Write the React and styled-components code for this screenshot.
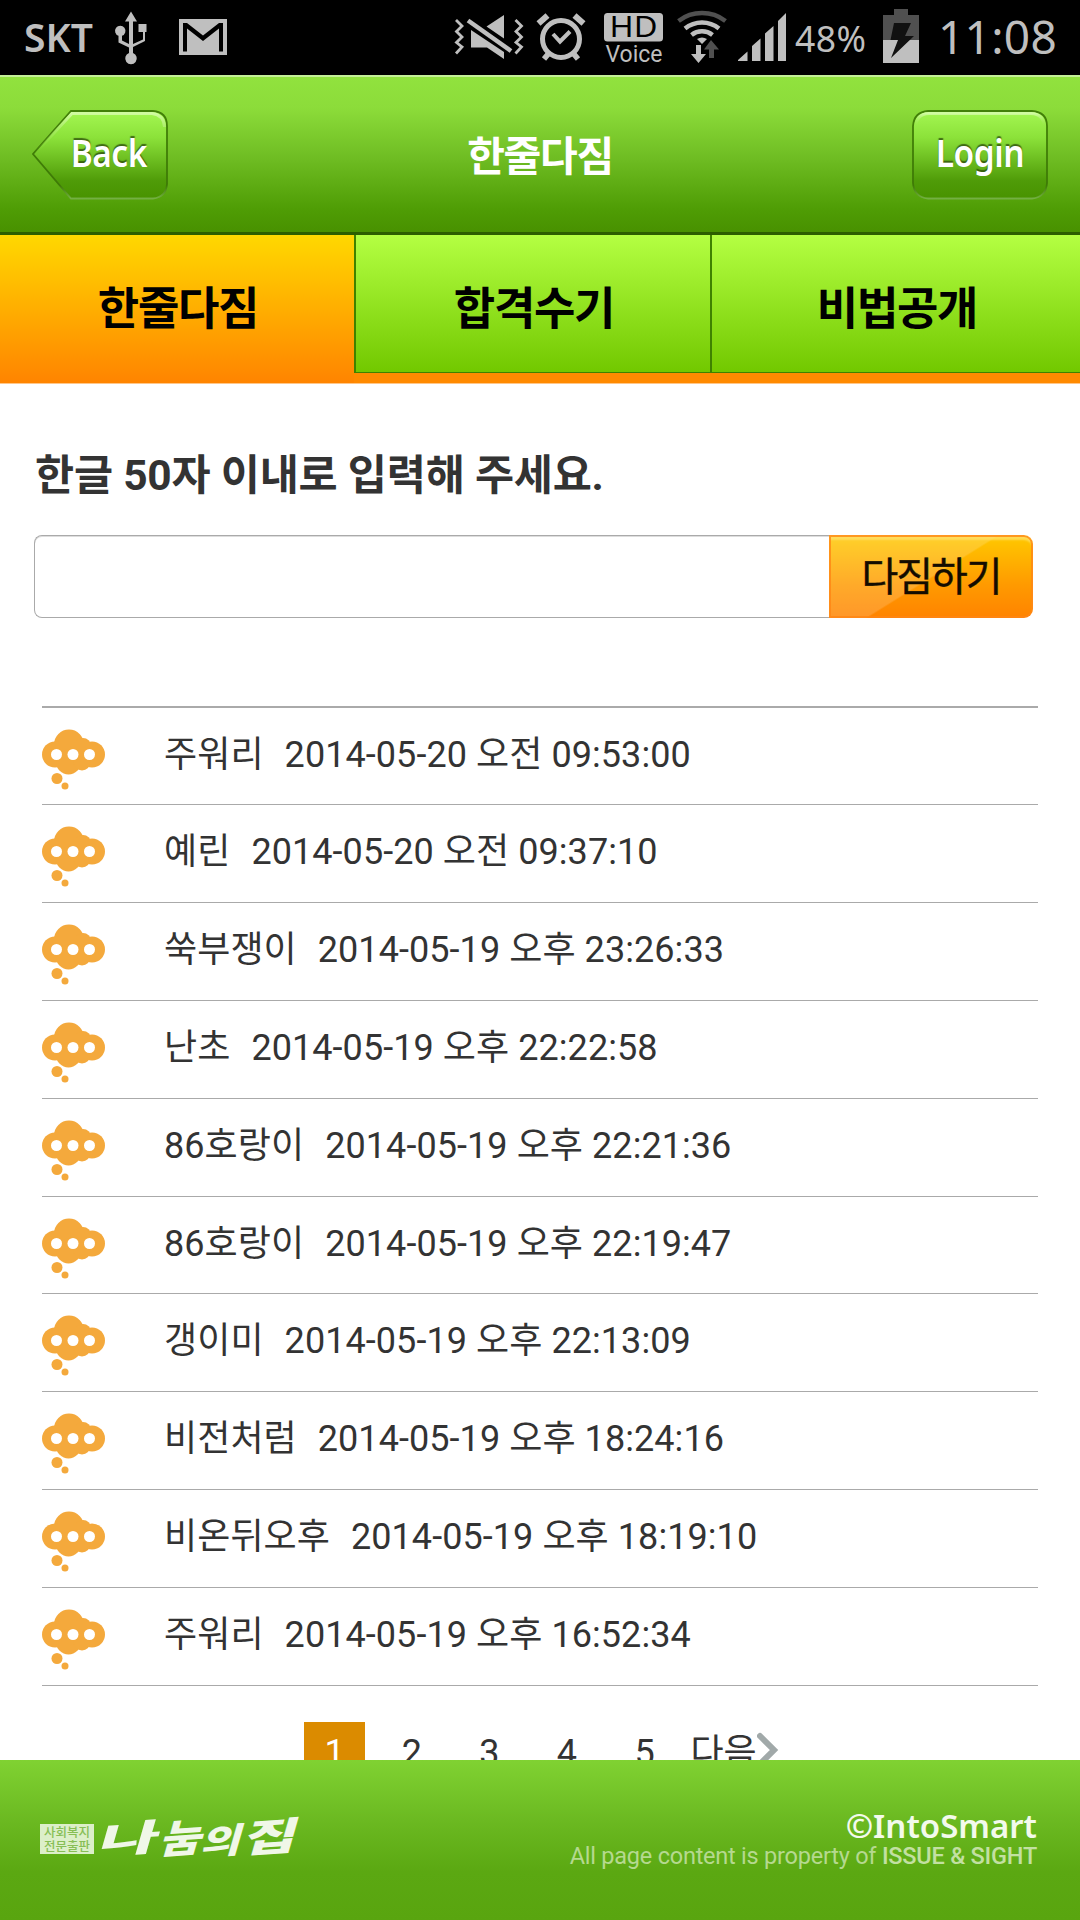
import React from "react";
import styled, { createGlobalStyle } from "styled-components";

const Global = createGlobalStyle`
  * { box-sizing: border-box; }
  html, body { margin: 0; padding: 0; background: #fff; }
  body {
    width: 1080px; height: 1920px; overflow: hidden;
    font-family: Roboto, "Noto Sans CJK KR", sans-serif; color: #333;
  }
`;

const Screen = styled.div`
  width: 1080px; height: 1920px; display: flex; flex-direction: column; overflow: hidden;
`;

const StatusBar = styled.div`
  flex: none; height: 75px; background: #000; color: #bfbfbf;
  display: flex; align-items: flex-start; justify-content: space-between;
  font-family: "Noto Sans", sans-serif; line-height: 1;
`;
const StatusGroup = styled.div`
  display: flex; align-items: flex-start;
`;
const StatusText = styled.span`
  font-size: ${(p) => p.$size}px; font-weight: ${(p) => p.$weight || 400};
  line-height: ${(p) => p.$line}px; width: ${(p) => p.$width}px;
  margin-left: ${(p) => p.$gap || 0}px; white-space: nowrap;
  letter-spacing: ${(p) => p.$track || 0}px;
`;
const StatusSvg = styled.svg`
  display: block; flex: none;
`;

const Header = styled.header`
  flex: none; height: 160px; padding: 0 32px;
  display: flex; align-items: flex-start; justify-content: space-between;
  background: linear-gradient(#91e23e 0, #8cdc3a 20%, #6fbd23 52%, #4f9d05 85%, #489100 100%);
  border-top: 2px solid #c4ef98; border-bottom: 3px solid #2c5e00;
`;
const HeaderTitle = styled.h1`
  margin: 0; color: #fff; font-size: 41px; font-weight: 700; line-height: 160px; height: 155px;
  letter-spacing: -1.3px;
`;
const HeaderButton = styled.button`
  width: 136px; height: 90px; margin: 33px 0 0; padding: 0; border: 0; background: none;
  display: grid; place-items: stretch; color: #fff; font-family: "Noto Sans", sans-serif;
  > * { grid-area: 1 / 1; }
`;
const ButtonCaption = styled.span`
  padding-left: ${(p) => p.$inset || 0}px; font-size: 38px; font-weight: 600; line-height: 84px;
  text-shadow: 0 -2px 1px rgba(40, 70, 10, 0.75); transform: scaleX(0.88);
  text-align: center; z-index: 1; letter-spacing: -0.5px;
`;

const Tabs = styled.nav`
  flex: none; height: 149px; display: grid; grid-template-columns: 354px 356px 370px;
  background: #ff8a00; border-bottom: 1px solid #ffc78a;
`;
const Tab = styled.a`
  height: ${(p) => (p.$active ? 148 : 138)}px; line-height: 149px; text-align: center;
  padding-left: 2px;
  color: #000; font-size: 45px; font-weight: 700; letter-spacing: -1.3px;
  border-left: ${(p) => (p.$active ? "0" : "2px solid #3f8200")};
  border-bottom: ${(p) => (p.$active ? "0" : "1px solid #3f8200")};
  background: ${(p) =>
    p.$active ? "linear-gradient(#ffd800, #ffae00 50%, #ff8400)" : "linear-gradient(#b4ff42, #72c800)"};
`;

const Content = styled.main`
  flex: 1; min-height: 0; overflow: hidden; display: flex; flex-direction: column;
`;
const Prompt = styled.label`
  display: block; margin: 60px 0 0 35px; height: 64px; line-height: 64px;
  font-size: 42.5px; font-weight: 700; color: #333; letter-spacing: -0.2px; white-space: nowrap;
`;
const EntryForm = styled.form`
  margin: 27px 0 0 34px; display: flex; height: 83px;
`;
const EntryInput = styled.input`
  width: 795px; height: 83px; border: 1px solid #aaa; border-right: 0; border-radius: 8px 0 0 8px;
  background: #fff; outline: 0; box-shadow: inset 0 1px 0 #ddd;
`;
const SubmitButton = styled.button`
  width: 204px; height: 83px; padding: 0; border: 0; border-radius: 0 9px 9px 0;
  background:
    linear-gradient(148deg, rgba(255, 255, 255, 0.16) 50%, rgba(255, 255, 255, 0) 51%),
    linear-gradient(#ffc900, #ff9a00 60%, #ff8300);
  box-shadow: inset 0 0 0 2px rgba(255, 134, 20, 0.8), inset 0 5px 2px rgba(255, 225, 110, 0.75);
  color: #140c00; font-family: "Noto Sans CJK KR", sans-serif; font-size: 40px; font-weight: 400;
  line-height: 78px; letter-spacing: -2px; -webkit-text-stroke: 0.4px #140c00;
  display: flex; justify-content: center; align-items: flex-start;
`;

const List = styled.ul`
  list-style: none; margin: 88px 42px 0; padding: 0; border-top: 2px solid #aaa;
`;
const Row = styled.li`
  height: 97.9px; border-bottom: 1.5px solid #aaa; display: flex; align-items: flex-start;
  font-size: 36px; line-height: 95px; white-space: pre; letter-spacing: 0.07px;
  &:first-child { height: 97px; line-height: 94px; }
`;
const CloudBox = styled.span`
  width: 63px; margin: 21px 59px 0 0; line-height: 0;
`;
const Author = styled.span`
  margin-right: 21px;
`;

const Pager = styled.div`
  margin: 36px 0 0 304px; display: flex; font-size: 36px; line-height: 62px;
`;
const Page = styled.a`
  width: ${(p) => (p.$active ? 61 : 77.6)}px; height: 62px; text-align: center;
  background: ${(p) => (p.$active ? "#db8b00" : "none")}; color: ${(p) => (p.$active ? "#fff" : "#333")};
  margin-right: ${(p) => (p.$active ? 8 : 0)}px;
`;
const NextPage = styled.a`
  margin-left: 7px; display: flex;
`;

const Footer = styled.footer`
  flex: none; height: 160px; padding: 0 43px 0 40px; display: flex; justify-content: space-between;
  align-items: flex-start; background: linear-gradient(#80d232, #6bb921 38%, #5ba812 70%, #59a50f);
`;
const Brand = styled.div`
  display: flex; align-items: flex-start; padding-top: 64px;
`;
const Seal = styled.div`
  width: 54px; height: 30px; background: #dcefc9; color: #87be55; padding-top: 1px;
  font: 500 12.5px/14px "Noto Sans CJK KR", sans-serif; text-align: center;
  display: flex; flex-direction: column;
`;
const BrandName = styled.div`
  display: flex; margin-left: 7px; color: #f0f7e8; height: 36px; align-items: flex-start;
  font-family: "Noto Sans CJK KR", sans-serif; font-weight: 900;
`;
const Stroke = styled.span`
  font-size: ${(p) => p.$size}px; line-height: 36px; width: ${(p) => p.$width}px;
  transform-origin: 0 50%; transform: translateY(${(p) => p.$drop || 0}px) skew(-16deg, -4deg) scaleX(${(p) => p.$stretch});
  white-space: nowrap;
`;
const Legal = styled.div`
  display: flex; flex-direction: column; align-items: flex-end; white-space: nowrap; padding-top: 46px;
`;
const Copyright = styled.div`
  font: 600 33px/40px "Noto Sans", sans-serif; color: #f3faec;
`;
const Property = styled.div`
  font: 400 23.500px/28px Roboto, sans-serif; color: #b5d98f; margin-top: -4px; letter-spacing: -0.23px;
  b { font-weight: 500; color: #c2e0a2; }
`;

const StatusLeftIcons = () => (
  <StatusSvg width="150" height="75" viewBox="100 0 150 75" fill="#bfbfbf">
    <path d="M131 11.500L137 21.500H133V44L143 39.500V32H138.500V24H146.500V32H145V41L133 47V53A5.800 5.800 0 1 1 129 53V47.500L118.500 42.500V35.800A5.200 5.200 0 1 1 122 35.800V40.500L129 44V21.500H125Z" />
    <path d="M179 19H227V55H179Z" />
    <path d="M183 51.500V23H187L203 35.500L219 23H223V51.500H219V28.500L203 41L187 28.500V51.500Z" fill="#000" />
  </StatusSvg>
);

const StatusRightIcons = () => (
  <StatusSvg width="346" height="75" viewBox="448 0 346 75" fill="#bfbfbf">
    <g fill="none" stroke="#bfbfbf" strokeWidth="2.800">
      <path d="M456 20L462 26L456.500 31.500L462 37L456.500 42.500L462 47L456 53.500" />
      <path d="M515.500 20L521.500 26L516 31.500L521.500 37L516 42.500L521.500 47L515.500 53.500" />
    </g>
    <path d="M504 15V38.500L486.500 26.500ZM471 30L504 52V59L487 47.500H471Z" />
    <path d="M468 20.500L511 51" stroke="#bfbfbf" strokeWidth="4.500" />
    <g fill="none" stroke="#bfbfbf">
      <circle cx="561" cy="39" r="18.500" strokeWidth="5" />
      <path d="M553 34L560 41.500L570 31.500" strokeWidth="4" />
      <path d="M538.500 23.500L547.500 15.500M583.500 23.500L574.500 15.500" strokeWidth="6" />
      <path d="M549 53L544 59M573 53L578 59" strokeWidth="5.500" />
    </g>
    <rect x="604" y="13" width="59" height="28.500" rx="3.500" />
    <text x="633.500" y="36.500" fill="#000" textAnchor="middle" fontFamily="Noto Sans" fontSize="28.500" textLength="48" lengthAdjust="spacingAndGlyphs">HD</text>
    <text x="634" y="61.500" textAnchor="middle" fontFamily="Roboto" fontSize="23" textLength="57" lengthAdjust="spacingAndGlyphs">Voice</text>
    <g fill="none" stroke="#bfbfbf" strokeWidth="4.500">
      <path d="M678.500 21A39 39 0 0 1 725.500 21" stroke="#505050" />
      <path d="M685 28.500A27 27 0 0 1 719 28.500" />
      <path d="M691.500 35A17 17 0 0 1 712.500 35" />
    </g>
    <path d="M697 39Q702 36 707 39L702 44Z" />
    <path d="M711 40L719 49.500H714V58H709V49.500H704Z" fill="#505050" />
    <path d="M696 45H701V54H706L698.500 63L691 54H696Z" />
    <path d="M738 61V60L747.500 51.500V61ZM752 61V46L760.500 38.500V61ZM765 61V33.500L773.500 26V61ZM778 61V21L786 13V61Z" />
  </StatusSvg>
);

const BatteryIcon = () => (
  <StatusSvg width="36" height="75" viewBox="883 0 36 75">
    <path d="M894 9H908V15H919V40H883V15H894Z" fill="#505050" />
    <path d="M883 40H919V63H883Z" fill="#bfbfbf" />
    <path d="M894 23H911L905 36H914L891 58L898 40H890.500Z" fill="#111" />
  </StatusSvg>
);

const ButtonShape = ({ back }) => {
  const id = back ? "backFill" : "loginFill";
  const outer = back
    ? "M39 1H121Q135 2 135 16V74Q134 87 121 88.500H39L1 44Z"
    : "M16 1H120Q135 2 135 16V73Q134 87 120 88.500H16Q2 87 1 73V16Q2 2 16 1Z";
  const shine = back ? "M3.500 43L40 3.500H120Q132 5 132.500 17" : "M3.500 18Q4 4 17 3.500H119Q132 4 132.500 18";
  return (
    <svg width="136" height="90" viewBox="0 0 136 90">
      <defs>
        <linearGradient id={id} x1="0" y1="0" x2="0" y2="1">
          <stop offset="0.050" stopColor="#a0f34e" />
          <stop offset="0.300" stopColor="#8ce23a" />
          <stop offset="0.800" stopColor="#4f9b08" />
          <stop offset="1" stopColor="#489300" />
        </linearGradient>
        <linearGradient id={id + "Edge"} x1="0" y1="0" x2="0" y2="1">
          <stop offset="0" stopColor="#428008" />
          <stop offset="0.850" stopColor="#3e7a06" />
          <stop offset="1" stopColor="#73b042" />
        </linearGradient>
        <linearGradient id={id + "Shine"} x1="0" y1="0" x2="0" y2="1">
          <stop offset="0" stopColor="#d0fba0" />
          <stop offset="1" stopColor="#8de03c" stopOpacity="0" />
        </linearGradient>
      </defs>
      <path d={outer} fill={`url(#${id})`} stroke={`url(#${id}Edge)`} strokeWidth="1.800" />
      <path d={shine} fill="none" stroke={`url(#${id}Shine)`} strokeWidth="3" />
    </svg>
  );
};

const CloudIcon = () => (
  <svg width="63" height="61" viewBox="0 0 63 61">
    <g fill="#f4a93c">
      <circle cx="27" cy="15.500" r="15" />
      <circle cx="41" cy="17" r="8" />
      <circle cx="13" cy="25.500" r="13" />
      <circle cx="50" cy="25.500" r="13" />
      <rect x="12" y="13" width="38" height="25" />
      <circle cx="26.500" cy="33" r="12.500" />
      <circle cx="40" cy="33" r="8.500" />
      <circle cx="15" cy="49.500" r="5.500" />
      <circle cx="23" cy="57" r="3.500" />
    </g>
    <g fill="#fff">
      <circle cx="14.500" cy="25.500" r="5.500" />
      <circle cx="31" cy="25.500" r="5.500" />
      <circle cx="47.500" cy="25.500" r="5.500" />
    </g>
  </svg>
);

const tabs = ["한줄다짐", "합격수기", "비법공개"];
const entries = [
  ["주워리", "2014-05-20 오전 09:53:00"],
  ["예린", "2014-05-20 오전 09:37:10"],
  ["쑥부쟁이", "2014-05-19 오후 23:26:33"],
  ["난초", "2014-05-19 오후 22:22:58"],
  ["86호랑이", "2014-05-19 오후 22:21:36"],
  ["86호랑이", "2014-05-19 오후 22:19:47"],
  ["갱이미", "2014-05-19 오후 22:13:09"],
  ["비전처럼", "2014-05-19 오후 18:24:16"],
  ["비온뒤오후", "2014-05-19 오후 18:19:10"],
  ["주워리", "2014-05-19 오후 16:52:34"],
];

export default function App() {
  return (
    <Screen>
      <Global />
      <StatusBar>
        <StatusGroup>
          <StatusText $size={39} $weight={600} $line={74} $width={76} $gap={24}>SKT</StatusText>
          <StatusLeftIcons />
        </StatusGroup>
        <StatusGroup>
          <StatusRightIcons />
          <StatusText $size={35.5} $line={77} $width={88} $gap={1} $track={0.4}>48%</StatusText>
          <BatteryIcon />
          <StatusText $size={46} $line={72} $width={142} $gap={19} $track={0.3}>11:08</StatusText>
        </StatusGroup>
      </StatusBar>
      <Header>
        <HeaderButton>
          <ButtonShape back />
          <ButtonCaption $inset={20}>Back</ButtonCaption>
        </HeaderButton>
        <HeaderTitle>한줄다짐</HeaderTitle>
        <HeaderButton>
          <ButtonShape />
          <ButtonCaption>Login</ButtonCaption>
        </HeaderButton>
      </Header>
      <Tabs>
        {tabs.map((t, i) => (
          <Tab key={t} $active={i === 0}>{t}</Tab>
        ))}
      </Tabs>
      <Content>
        <Prompt htmlFor="pledge">한글 50자 이내로 입력해 주세요.</Prompt>
        <EntryForm>
          <EntryInput id="pledge" />
          <SubmitButton type="button">다짐하기</SubmitButton>
        </EntryForm>
        <List>
          {entries.map(([name, date], i) => (
            <Row key={i}>
              <CloudBox><CloudIcon /></CloudBox>
              <Author>{name}</Author>
              <span>{date}</span>
            </Row>
          ))}
        </List>
        <Pager>
          {[1, 2, 3, 4, 5].map((n) => (
            <Page key={n} $active={n === 1}>{n}</Page>
          ))}
          <NextPage>
            다음
            <svg width="24" height="44" viewBox="0 0 24 44">
              <path d="M3 14L17 28L3 42" fill="none" stroke="#a1a9a9" strokeWidth="6" strokeLinecap="round" />
            </svg>
          </NextPage>
        </Pager>
      </Content>
      <Footer>
        <Brand>
          <Seal><span>사회복지</span><span>전문출판</span></Seal>
          <BrandName>
            <Stroke $size={37} $width={62} $stretch={1.75} $drop={-4}>나</Stroke>
            <Stroke $size={39} $width={41} $stretch={1.18} $drop={-5}>눔</Stroke>
            <Stroke $size={35} $width={42} $stretch={1.25} $drop={-2}>의</Stroke>
            <Stroke $size={39} $width={52} $stretch={1.5} $drop={-6}>집</Stroke>
          </BrandName>
        </Brand>
        <Legal>
          <Copyright>©IntoSmart</Copyright>
          <Property>All page content is property of <b>ISSUE &amp; SIGHT</b></Property>
        </Legal>
      </Footer>
    </Screen>
  );
}
